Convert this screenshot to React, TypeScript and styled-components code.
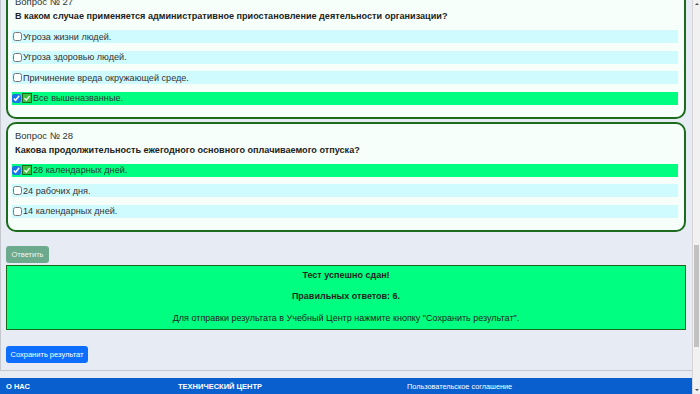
import styled, { createGlobalStyle } from 'styled-components';

const GlobalStyle = createGlobalStyle`
  html, body {
    margin: 0;
    padding: 0;
    background: #e7ecf4;
    overflow: hidden;
  }
  body {
    font-family: "Liberation Sans", Arial, sans-serif;
    color: #212529;
  }
`;

type Option = { text: string; checked?: boolean };
type Question = { num: number; title: string; options: Option[] };

const QUESTIONS: Question[] = [
	{
		num: 27,
		title: 'В каком случае применяется административное приостановление деятельности организации?',
		options: [
			{ text: 'Угроза жизни людей.' },
			{ text: 'Угроза здоровью людей.' },
			{ text: 'Причинение вреда окружающей среде.' },
			{ text: 'Все вышеназванные.', checked: true }
		]
	},
	{
		num: 28,
		title: 'Какова продолжительность ежегодного основного оплачиваемого отпуска?',
		options: [
			{ text: '28 календарных дней.', checked: true },
			{ text: '24 рабочих дня.' },
			{ text: '14 календарных дней.' }
		]
	}
];

const Viewport = styled.div`
  display: flex;
  height: 394px;
  overflow: hidden;
`;

const PageColumn = styled.div`
  flex: 1;
  display: flex;
  flex-direction: column;
  overflow: hidden;
`;

/* the page is scrolled a little: top of question 27 sits above the window */
const Main = styled.main`
  margin-top: -12px;
  padding: 0 6px 7px 5px;
  border-left: 1px solid #c4c8ce;
  border-bottom: 1px solid #c4c8ce;
  display: flex;
  flex-direction: column;
`;

const Card = styled.section`
  background: #f6fffa;
  border: 2px solid #1d6b1d;
  border-radius: 10px;
  padding: 5px 6px 12px 4px;
  margin-bottom: 3px;
`;

const QuestionNumber = styled.div`
  font-size: 9.5px;
  line-height: 14px;
  margin-left: 3px;
  color: #333;
`;

const QuestionTitle = styled.div`
  font-size: 9.1px;
  line-height: 14px;
  font-weight: 700;
  margin-left: 3px;
  color: #222;
`;

const OptionList = styled.div`
  margin-top: 7px;
  display: flex;
  flex-direction: column;
  gap: 7.5px;
`;

const OptionRow = styled.label<{ $checked?: boolean }>`
  display: flex;
  align-items: center;
  height: 13px;
  background: ${p => (p.$checked ? '#00ff80' : '#cffbff')};
  font-size: 9.1px;
  color: #333;
`;

const Box = styled.input`
  width: 9px;
  height: 9px;
  margin: 0 1px 0 ${p => (p.checked ? '0' : '1px')};
  accent-color: #1a73e8;
`;

const CheckMark = styled.svg`
  width: 10px;
  height: 10px;
  margin-right: 1px;
  flex-shrink: 0;
`;

const AnswerButton = styled.button`
  align-self: flex-start;
  margin-top: 11px;
  width: 43px;
  height: 17px;
  border: none;
  border-radius: 3px;
  background: #6da98d;
  color: #eef6f2;
  font-family: inherit;
  font-size: 7.5px;
  padding: 0;
`;

const ResultBox = styled.div`
  margin-top: 2px;
  height: 65px;
  box-sizing: border-box;
  background: #00ff80;
  border: 1px solid #1a6a1a;
  display: flex;
  flex-direction: column;
  align-items: center;
  padding-top: 2px;
  gap: 7.5px;
  font-size: 9px;
  line-height: 14px;
  color: #222;
`;

const ResultLine = styled.div<{ $bold?: boolean }>`
  font-weight: ${p => (p.$bold ? 700 : 400)};
`;

const SaveButton = styled.button`
  align-self: flex-start;
  margin-top: 16px;
  width: 82px;
  height: 17px;
  border: none;
  border-radius: 3px;
  background: #0d6efd;
  color: #fff;
  font-family: inherit;
  font-size: 7.5px;
  padding: 0;
`;

const Footer = styled.footer`
  margin-top: 7px;
  background: #0a5fcf;
  color: #fff;
  height: 40px;
  display: grid;
  grid-template-columns: 172px 229px 1fr;
  padding-top: 2px;
  font-size: 7.5px;
  line-height: 14px;
`;

const FooterCell = styled.div<{ $bold?: boolean }>`
  padding-left: 6px;
  font-weight: ${p => (p.$bold ? 700 : 400)};
  font-size: ${p => (p.$bold ? '7.5px' : '7.3px')};
`;

const ScrollTrack = styled.div`
  width: 7px;
  border-left: 1px solid #d6d6d6;
  background: #f1f1f1;
  display: flex;
  flex-direction: column;
  align-items: center;
`;

const Arrow = styled.div<{ $down?: boolean }>`
  width: 0;
  height: 0;
  margin: 3px 0;
  border-left: 2px solid transparent;
  border-right: 2px solid transparent;
  ${p => (p.$down ? 'border-top: 2px solid #505050;' : 'border-bottom: 2px solid #505050;')}
`;

const Thumb = styled.div`
  width: 5px;
  height: 102px;
  margin-top: 237px;
  background: #c1c1c1;
`;

const Spacer = styled.div`
  flex: 1;
`;

const GreenCheck = () => (
	<CheckMark viewBox='0 0 10 10'>
		<rect x='0.5' y='0.5' width='9' height='9' fill='#3fc23f' stroke='#1b6e1b' />
		<path d='M2.4 5.2 L4.2 7 L7.6 3.1' fill='none' stroke='#fff' strokeWidth='1.3' />
	</CheckMark>
);

const QuestionCard = ({ q }: { q: Question }) => (
	<Card>
		<QuestionNumber>Вопрос № {q.num}</QuestionNumber>
		<QuestionTitle>{q.title}</QuestionTitle>
		<OptionList>
			{q.options.map(o => (
				<OptionRow key={o.text} $checked={o.checked}>
					<Box type='checkbox' checked={!!o.checked} readOnly />
					{o.checked && <GreenCheck />}
					{o.text}
				</OptionRow>
			))}
		</OptionList>
	</Card>
);

const App = () => (
	<Viewport>
		<GlobalStyle />
		<PageColumn>
			<Main>
				{QUESTIONS.map(q => <QuestionCard key={q.num} q={q} />)}
				<AnswerButton disabled>Ответить</AnswerButton>
				<ResultBox>
					<ResultLine $bold>Тест успешно сдан!</ResultLine>
					<ResultLine $bold>Правильных ответов: 6.</ResultLine>
					<ResultLine>Для отправки результата в Учебный Центр нажмите кнопку "Сохранить результат".</ResultLine>
				</ResultBox>
				<SaveButton>Сохранить результат</SaveButton>
			</Main>
			<Footer>
				<FooterCell $bold>О НАС</FooterCell>
				<FooterCell $bold>ТЕХНИЧЕСКИЙ ЦЕНТР</FooterCell>
				<FooterCell>Пользовательское соглашение</FooterCell>
			</Footer>
		</PageColumn>
		<ScrollTrack>
			<Arrow />
			<Thumb />
			<Spacer />
			<Arrow $down />
		</ScrollTrack>
	</Viewport>
);

export default App;
